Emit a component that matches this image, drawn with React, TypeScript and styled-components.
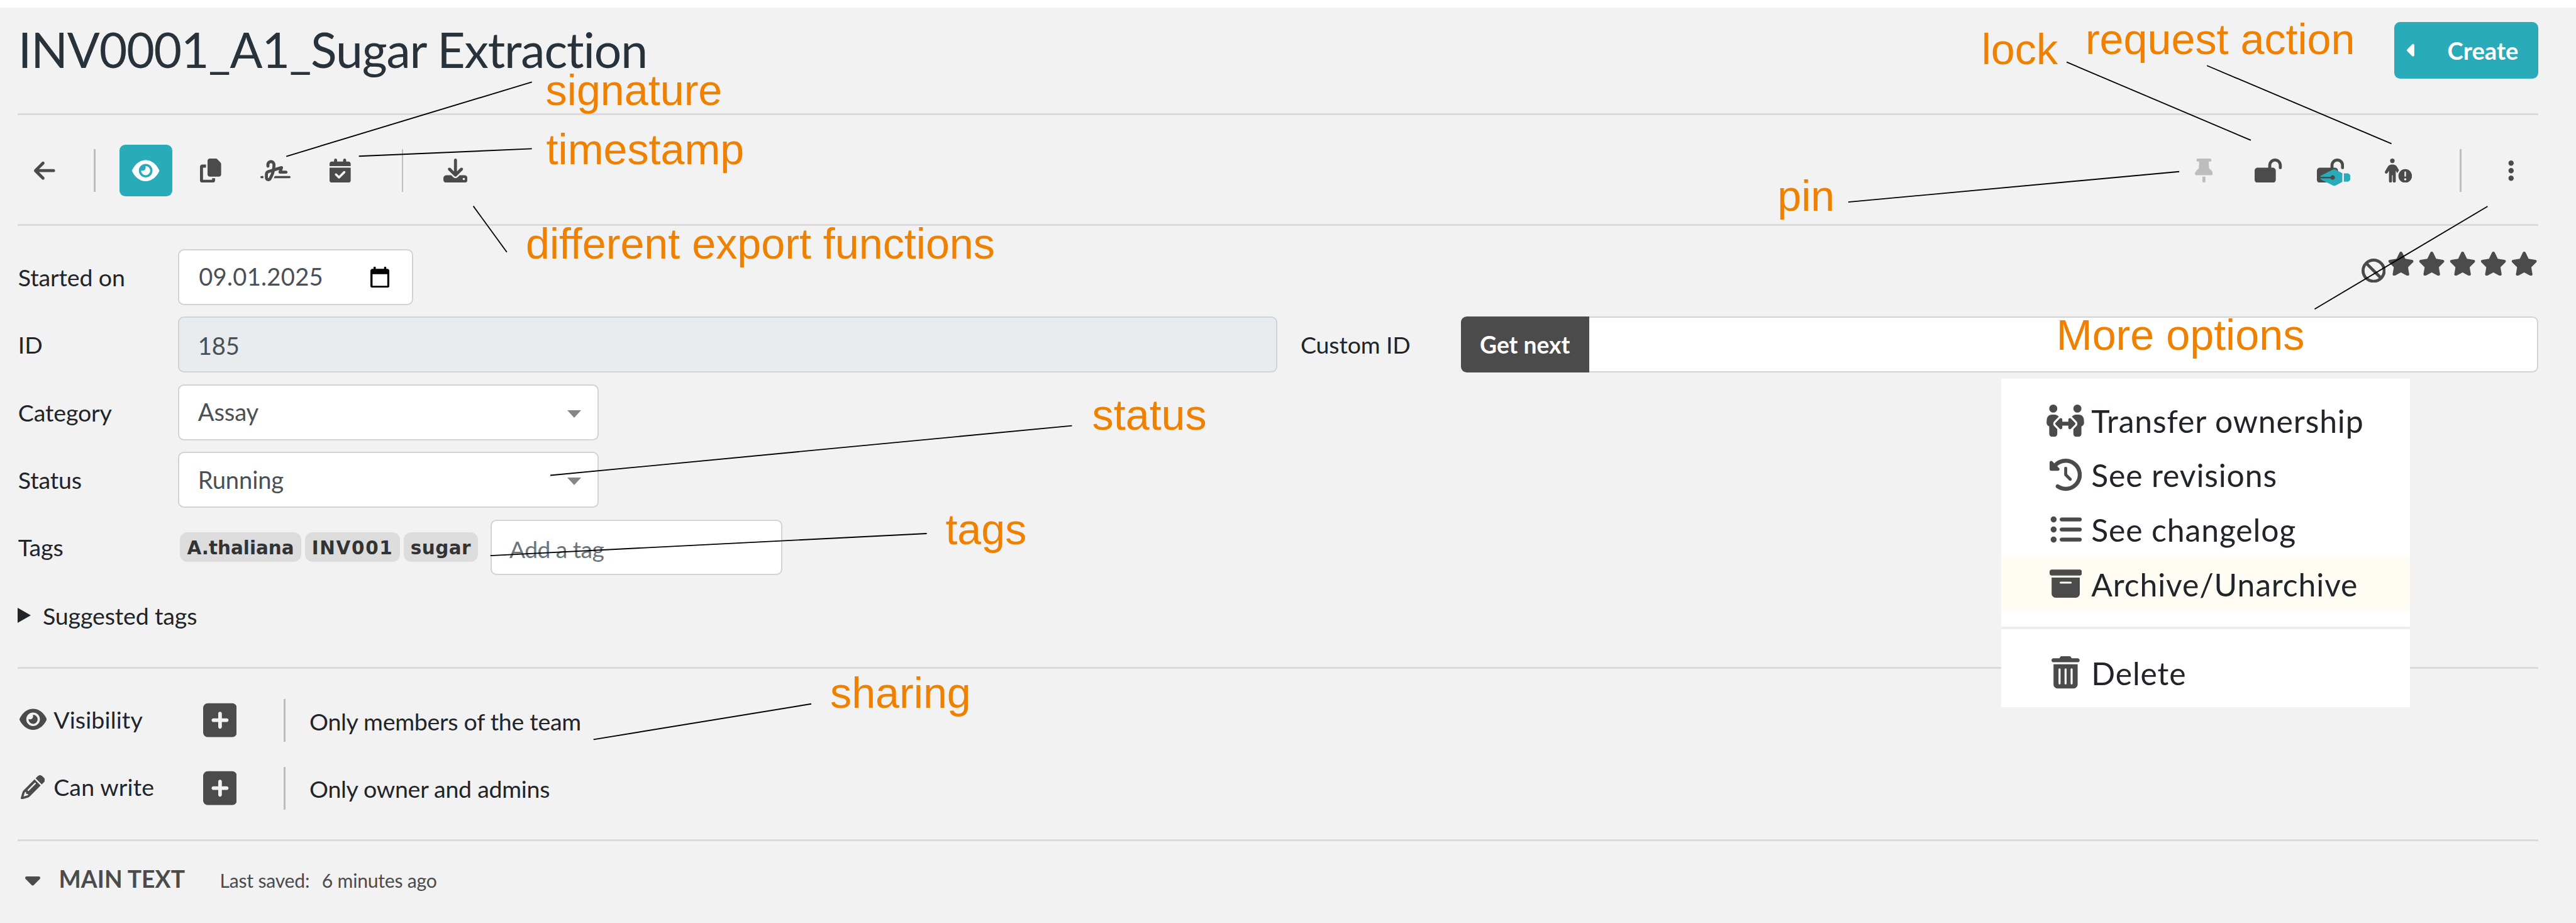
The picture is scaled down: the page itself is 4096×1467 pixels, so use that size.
import React from 'react';
import styled, { createGlobalStyle, css } from 'styled-components';
import {
  FaArrowLeft, FaEye, FaCopy, FaSignature, FaCalendarCheck, FaDownload, FaThumbtack,
  FaLockOpen, FaPenNib, FaPersonCircleExclamation, FaEllipsisVertical, FaBan, FaStar,
  FaPeopleArrows, FaClockRotateLeft, FaListUl, FaBoxArchive, FaTrashCan, FaPencil,
  FaSquarePlus, FaCaretDown, FaCaretLeft,
} from 'react-icons/fa6';

const SCALE = 4096 / 4400;
const u = (n: number) => `${+(n * SCALE).toFixed(2)}px`;

const color = {
  page: '#f2f2f2',
  teal: '#29abb9',
  dark: '#4b4b4b',
  title: '#28323a',
  text: '#212529',
  field: '#495057',
  border: '#ced4da',
  rule: '#dadada',
  note: '#ef8000',
};

const GlobalStyle = createGlobalStyle`
  * { box-sizing: border-box; }
  body {
    margin: 0;
    background: #fff;
    overflow: hidden;
    font-family: Lato, "Liberation Sans", sans-serif;
    font-size: ${u(40.3)};
    line-height: 1.2;
    letter-spacing: ${u(-0.15)};
    color: ${color.text};
  }
  svg { display: block; flex: none; }
`;

const Page = styled.div`
  position: relative;
  width: 4096px;
  height: 1467px;
  padding-top: ${u(13)};
  overflow: hidden;
`;

const Sheet = styled.main`
  display: flex;
  flex-direction: column;
  height: 100%;
  padding: 0 ${u(65)} 0 ${u(30)};
  background: ${color.page};
`;

const Rule = styled.hr`
  flex: none;
  width: 100%;
  height: ${u(3)};
  margin: 0;
  border: 0;
  background: ${color.rule};
`;

const Header = styled.header`
  display: flex;
  flex: none;
  justify-content: space-between;
  align-items: flex-start;
  height: ${u(180.5)};
  padding-top: ${u(25)};
`;

const Title = styled.h1`
  margin: 0 0 0 ${u(1)};
  color: ${color.title};
  font-size: ${u(82.6)};
  font-weight: 400;
  line-height: ${u(94)};
  letter-spacing: ${u(-1.22)};
  white-space: nowrap;
`;

const CreateButton = styled.button`
  display: flex;
  align-items: center;
  justify-content: space-between;
  width: ${u(246)};
  height: ${u(96)};
  padding: 0 ${u(33.5)} 0 ${u(22)};
  border: 0;
  border-radius: ${u(10)};
  background: ${color.teal};
  color: #fff;
  font: 700 ${u(41)} Lato, sans-serif;
`;

/* $box is the width of the glyph's view box; every glyph is 512 units tall. */
const Icon = styled.span<{ $size?: number; $box?: number; $color?: string }>`
  display: inline-flex;
  flex: none;
  color: ${(p) => p.$color ?? color.dark};
  svg {
    width: ${(p) => u(((p.$size ?? 41.3) * (p.$box ?? 512)) / 512)};
    height: ${(p) => u(p.$size ?? 41.3)};
  }
`;

const Toolbar = styled.nav`
  display: flex;
  flex: none;
  align-items: center;
  justify-content: space-between;
  height: ${u(186)};
  padding-top: ${u(3)};
`;

const ToolGroup = styled.div`
  display: flex;
  align-items: center;
`;

const Tool = styled.button<{ $active?: boolean; $gap?: number; $width?: number }>`
  display: flex;
  align-items: center;
  justify-content: center;
  width: ${(p) => u(p.$width ?? 90)};
  height: ${u(88)};
  margin: 0 0 0 ${(p) => u(p.$gap ?? 20.6)};
  padding: 0;
  border: 0;
  border-radius: ${u(10)};
  background: ${(p) => (p.$active ? color.teal : 'transparent')};
`;

const Divider = styled.span<{ $gap?: number }>`
  flex: none;
  width: ${u(2.8)};
  height: ${u(73)};
  margin-left: ${(p) => u(p.$gap ?? 0)};
  background: #bdbdbd;
`;

const LockStack = styled.span`
  position: relative;
  display: flex;
`;

const NibBadge = styled(Icon)`
  position: absolute;
  left: ${u(11.5)};
  top: ${u(12.5)};
  svg { transform: rotate(45deg); }
`;

const Form = styled.section`
  display: flex;
  flex: none;
  flex-direction: column;
  gap: ${u(20.4)};
  height: ${u(753)};
  padding-top: ${u(40)};
`;

const Row = styled.div`
  display: flex;
  flex: none;
  align-items: center;
  height: ${u(95)};
`;

const Label = styled.label<{ $width?: number }>`
  flex: none;
  width: ${(p) => u(p.$width ?? 274.5)};
  padding-left: ${u(1)};
  white-space: nowrap;
`;

const field = css`
  display: flex;
  align-items: center;
  height: ${u(95.4)};
  border: ${u(2.8)} solid ${color.border};
  border-radius: ${u(10)};
  background: #fff;
  color: ${color.field};
`;

const Field = styled.div<{ $width: number; $readOnly?: boolean }>`
  ${field}
  justify-content: space-between;
  flex: none;
  width: ${(p) => u(p.$width)};
  padding: ${(p) => (p.$readOnly ? u(4) : 0)} ${u(28)} 0 ${u(31.5)};
  font-size: ${u(41)};
  ${(p) => p.$readOnly && 'background: #e9ecef;'}
`;

const DateField = styled(Field)`
  padding-left: ${u(33)};
  padding-right: ${u(38)};
  letter-spacing: ${u(0.3)};
`;

const TagField = styled(Field)`
  margin-left: ${u(21.5)};
  padding-top: ${u(7)};
  padding-left: ${u(30)};
  color: #6c757d;
  font-size: ${u(40)};
  letter-spacing: ${u(-0.6)};
`;

const SelectArrow = styled.span`
  border: ${u(12.4)} solid transparent;
  border-top: ${u(13)} solid #868686;
  border-bottom: 0;
  margin-top: ${u(6)};
`;

const CustomId = styled.div`
  display: flex;
  flex: 1;
  align-items: center;
  padding-left: ${u(39)};
`;

const NextButton = styled.button`
  width: ${u(219.5)};
  height: ${u(95.4)};
  padding: 0;
  border: 0;
  border-radius: ${u(10)} 0 0 ${u(10)};
  background: ${color.dark};
  color: #fff;
  font: 700 ${u(40)} Lato, sans-serif;
`;

const CustomInput = styled.div`
  ${field}
  flex: 1;
  border-left: 0;
  border-radius: 0 ${u(10)} ${u(10)} 0;
`;

const Rating = styled.div`
  display: flex;
  align-self: flex-start;
  gap: ${u(6.2)};
  margin-left: auto;
  padding-top: ${u(4)};
`;

const Clear = styled(Icon)`
  margin-right: ${u(-2.8)};
  padding-top: ${u(12)};
`;

const TagList = styled.div`
  display: flex;
  gap: ${u(6)};
  padding-left: ${u(2.5)};
`;

const Tag = styled.span<{ $width: number; $spacing?: number }>`
  display: flex;
  align-items: center;
  justify-content: center;
  width: ${(p) => u(p.$width)};
  height: ${u(50.5)};
  padding-top: ${u(2)};
  border-radius: ${u(13)};
  background: #dcdcdc;
  color: #333;
  font: 700 ${u(31.6)} "DejaVu Sans", sans-serif;
  letter-spacing: ${(p) => u(p.$spacing ?? 0)};
`;

const Summary = styled(Row)`
  gap: ${u(20.5)};
  padding-top: ${u(1.5)};
`;

const Disclosure = styled.span`
  border: ${u(13.4)} solid transparent;
  border-left: ${u(23)} solid ${color.text};
  border-right: 0;
`;

const Sharing = styled.section`
  flex: none;
  height: ${u(291.5)};
  padding-top: ${u(31)};
`;

const ShareRow = styled.div`
  display: flex;
  align-items: center;
  height: ${u(115.5)};
`;

const ShareLabel = styled.span`
  display: flex;
  align-items: center;
  width: ${u(316.5)};
  margin-top: ${u(-4)};
  letter-spacing: ${u(0.15)};
  white-space: nowrap;
`;

const LeadIcon = styled(Icon)`
  justify-content: center;
  width: ${u(52)};
  margin-right: ${u(9.5)};
`;

const ShareText = styled.span`
  margin-left: ${u(41)};
  padding-top: ${u(2)};
  letter-spacing: ${u(-0.3)};
`;

const MainHead = styled.footer`
  display: flex;
  align-items: baseline;
  flex: none;
  padding-top: ${u(38.5)};
  color: ${color.dark};
`;

const MainTitle = styled.h2`
  width: ${u(276.5)};
  margin: 0;
  padding-left: ${u(1.5)};
  font-size: ${u(40)};
  font-weight: 700;
  letter-spacing: ${u(0.1)};
  white-space: nowrap;
`;

const MainCaret = styled(Icon)`
  width: ${u(69)};
  padding-left: ${u(13)};
  transform: translateY(${u(6)});
`;

const Saved = styled.span`
  display: flex;
  gap: ${u(21)};
  font-size: ${u(32.4)};
  letter-spacing: ${u(-0.25)};
  white-space: nowrap;
`;

const Menu = styled.aside`
  position: absolute;
  left: ${u(3418)};
  top: ${u(647)};
  width: ${u(698)};
  height: ${u(560)};
  padding-top: ${u(24)};
  background: #fff;
  font-size: ${u(53.6)};
  letter-spacing: ${u(0.95)};
`;

const MenuItem = styled.div<{ $hover?: boolean }>`
  display: flex;
  align-items: center;
  height: ${u(93)};
  padding: ${u(4)} 0 0 ${u(75)};
  background: ${(p) => (p.$hover ? '#fffcf3' : 'transparent')};
  white-space: nowrap;
`;

const MenuIcon = styled(Icon)`
  justify-content: center;
  width: ${u(70)};
  margin: ${u(-3)} ${u(9)} 0 0;
`;

const MenuRule = styled(Rule)`
  height: ${u(3.5)};
  margin: ${u(27.5)} 0;
  background: #e9eef2;
`;

const Notes = styled.div`
  position: absolute;
  inset: 0;
  color: ${color.note};
  font: ${u(73.3)} / ${u(84)} "Liberation Sans", Arial, sans-serif;
  letter-spacing: 0;
`;

const Note = styled.span<{ $x: number; $base: number }>`
  position: absolute;
  left: ${(p) => u(p.$x)};
  top: ${(p) => u(p.$base - 68.3)};
  white-space: nowrap;
`;

const Leaders = styled.svg`
  position: absolute;
  inset: 0;
  width: 100%;
  height: 100%;
  stroke: #000;
  stroke-width: 2;
`;

const notes: [string, number, number][] = [
  ['signature', 932, 180],
  ['timestamp', 933, 281],
  ['different export functions', 898, 442],
  ['lock', 3384.5, 110],
  ['request action', 3562, 93],
  ['pin', 3036, 360.7],
  ['More options', 3512.5, 597.6],
  ['status', 1865.5, 734.6],
  ['tags', 1615, 929.5],
  ['sharing', 1418, 1208.7],
];

const leaders: [number, number, number, number][] = [
  [489, 267, 908.5, 140],
  [613, 266.7, 908.5, 254],
  [808.5, 352, 865.7, 430.5],
  [3530, 106, 3844.6, 239.5],
  [3769.6, 112, 4084.8, 245.4],
  [3157, 345, 3722.3, 293],
  [3953.6, 527.8, 4249, 352.3],
  [940, 811.6, 1831, 726.9],
  [837.6, 948.7, 1583, 911],
  [1013.7, 1262.7, 1385.7, 1201.9],
];

const DateIcon = () => (
  <svg viewBox="0 0 18 20" fill="#000">
    <path d="M16 2h-1V0h-2v2H5V0H3v2H2C.9 2 0 2.900 0 4v14c0 1.100.9 2 2 2h14c1.100 0 2-.9 2-2V4c0-1.100-.9-2-2-2zm0 16H2V7h14z" />
  </svg>
);

export default function App() {
  return (
    <Page>
      <GlobalStyle />
      <Sheet>
        <Header>
          <Title>INV0001_A1_Sugar Extraction</Title>
          <CreateButton>
            <Icon $color="#fff" $size={34} $box={256}><FaCaretLeft /></Icon>
            Create
          </CreateButton>
        </Header>
        <Rule />
        <Toolbar>
          <ToolGroup>
            <Tool $gap={0} $width={92}><Icon $box={448}><FaArrowLeft /></Icon></Tool>
            <Divider $gap={38.6} />
            <Tool $active $gap={41}><Icon $color="#fff" $box={576}><FaEye /></Icon></Tool>
            <Tool><Icon $box={448}><FaCopy /></Icon></Tool>
            <Tool><Icon $box={640}><FaSignature /></Icon></Tool>
            <Tool><Icon $box={448}><FaCalendarCheck /></Icon></Tool>
            <Divider $gap={60} />
            <Tool $gap={44}><Icon><FaDownload /></Icon></Tool>
          </ToolGroup>
          <ToolGroup>
            <Tool><Icon $color="#bdbdbd" $box={384}><FaThumbtack /></Icon></Tool>
            <Tool><Icon $box={576}><FaLockOpen /></Icon></Tool>
            <Tool $gap={16}>
              <LockStack>
                <Icon $box={576}><FaLockOpen /></Icon>
                <NibBadge $color={color.teal} $size={41.3}><FaPenNib /></NibBadge>
              </LockStack>
            </Tool>
            <Tool $gap={25.5}><Icon $box={576}><FaPersonCircleExclamation /></Icon></Tool>
            <Divider $gap={60.5} />
            <Tool $gap={38.6} $width={92}><Icon $box={128}><FaEllipsisVertical /></Icon></Tool>
          </ToolGroup>
        </Toolbar>
        <Rule />
        <Form>
          <Row>
            <Label>Started on</Label>
            <DateField $width={401}>
              09.01.2025
              <Icon $size={36} $box={461}><DateIcon /></Icon>
            </DateField>
            <Rating>
              <Clear><FaBan /></Clear>
              {[1, 2, 3, 4, 5].map((n) => <Icon key={n} $box={576}><FaStar /></Icon>)}
            </Rating>
          </Row>
          <Row>
            <Label>ID</Label>
            <Field $width={1877} $readOnly>185</Field>
            <CustomId>
              <Label $width={274.5}>Custom ID</Label>
              <NextButton>Get next</NextButton>
              <CustomInput />
            </CustomId>
          </Row>
          <Row>
            <Label>Category</Label>
            <Field $width={718}>Assay<SelectArrow /></Field>
          </Row>
          <Row>
            <Label>Status</Label>
            <Field $width={718}>Running<SelectArrow /></Field>
          </Row>
          <Row>
            <Label>Tags</Label>
            <TagList>
              <Tag $width={208}>A.thaliana</Tag>
              <Tag $width={162.5} $spacing={1.8}>INV001</Tag>
              <Tag $width={127} $spacing={0.5}>sugar</Tag>
            </TagList>
            <TagField $width={498.5}>Add a tag</TagField>
          </Row>
          <Summary>
            <Disclosure />
            Suggested tags
          </Summary>
        </Form>
        <Rule />
        <Sharing>
          <ShareRow>
            <ShareLabel><LeadIcon $box={576}><FaEye /></LeadIcon>Visibility</ShareLabel>
            <Icon $size={66} $box={448}><FaSquarePlus /></Icon>
            <Divider $gap={80.5} />
            <ShareText>Only members of the team</ShareText>
          </ShareRow>
          <ShareRow>
            <ShareLabel><LeadIcon><FaPencil /></LeadIcon>Can write</ShareLabel>
            <Icon $size={66} $box={448}><FaSquarePlus /></Icon>
            <Divider $gap={80.5} />
            <ShareText>Only owner and admins</ShareText>
          </ShareRow>
        </Sharing>
        <Rule />
        <MainHead>
          <MainCaret $box={320}><FaCaretDown /></MainCaret>
          <MainTitle>MAIN TEXT</MainTitle>
          <Saved><span>Last saved:</span><span>6 minutes ago</span></Saved>
        </MainHead>
      </Sheet>
      <Menu>
        <MenuItem><MenuIcon $size={55} $box={640}><FaPeopleArrows /></MenuIcon>Transfer ownership</MenuItem>
        <MenuItem><MenuIcon $size={55}><FaClockRotateLeft /></MenuIcon>See revisions</MenuItem>
        <MenuItem><MenuIcon $size={55}><FaListUl /></MenuIcon>See changelog</MenuItem>
        <MenuItem $hover><MenuIcon $size={55}><FaBoxArchive /></MenuIcon>Archive/Unarchive</MenuItem>
        <MenuRule />
        <MenuItem><MenuIcon $size={55} $box={448}><FaTrashCan /></MenuIcon>Delete</MenuItem>
      </Menu>
      <Notes>
        {notes.map(([text, x, base]) => <Note key={text} $x={x} $base={base}>{text}</Note>)}
      </Notes>
      <Leaders viewBox="0 0 4400 1576" preserveAspectRatio="none">
        {leaders.map(([x1, y1, x2, y2]) => <line key={`${x1}-${y1}`} x1={x1} y1={y1} x2={x2} y2={y2} />)}
      </Leaders>
    </Page>
  );
}
